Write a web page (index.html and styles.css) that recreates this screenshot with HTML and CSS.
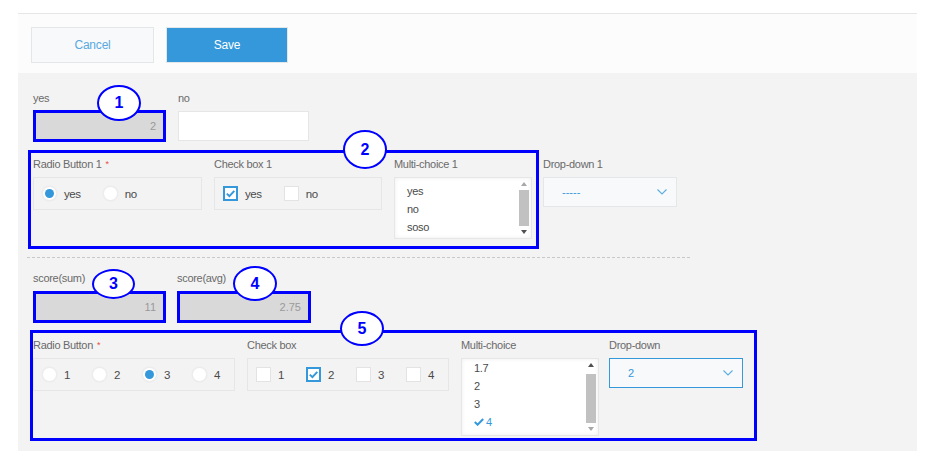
FILE: index.html
```html
<!DOCTYPE html>
<html>
<head>
<meta charset="utf-8">
<title>Form</title>
<link rel="stylesheet" href="styles.css">
</head>
<body>
<div class="panel">
  <div class="toolbar">
    <button class="btn btn-cancel">Cancel</button>
    <button class="btn btn-save">Save</button>
  </div>
  <div class="form">
    <div class="row row1">
      <div class="field w133">
        <div class="label">yes</div>
        <div class="calc up">2<span class="badge b1">1</span></div>
      </div>
      <div class="field w131">
        <div class="label">no</div>
        <div class="text-input"></div>
      </div>
    </div>

    <div class="row row2">
      <div class="group g2">
        <span class="badge b2">2</span>
        <div class="field w169">
          <div class="label">Radio Button 1<span class="req">*</span></div>
          <div class="choices">
            <span class="opt"><span class="radio on"></span>yes</span>
            <span class="opt"><span class="radio"></span>no</span>
          </div>
        </div>
        <div class="field w168">
          <div class="label">Check box 1</div>
          <div class="choices">
            <span class="opt"><span class="check on"><svg width="11" height="11" viewBox="0 0 11 11"><path d="M1.8 5.6 L4.4 8.1 L9.3 2.9" fill="none" stroke="#3498db" stroke-width="2"/></svg></span>yes</span>
            <span class="opt"><span class="check"></span>no</span>
          </div>
        </div>
        <div class="field w138">
          <div class="label">Multi-choice 1</div>
          <div class="list h62">
            <div class="list-items pad4">
              <div>yes</div>
              <div>no</div>
              <div>soso</div>
            </div>
            <div class="sb">
              <div class="sb-btn"><span class="tri-up light"></span></div>
              <div class="sb-thumb"></div>
              <div class="sb-btn"><span class="tri-down"></span></div>
            </div>
          </div>
        </div>
      </div>
      <div class="field w134 dd1">
        <div class="label">Drop-down 1</div>
        <div class="select"><span>-----</span><svg width="10" height="6" viewBox="0 0 10 6"><polyline points="0.5,0.5 5,5 9.5,0.5" fill="none" stroke="#5dade2" stroke-width="1.1"/></svg></div>
      </div>
    </div>

    <div class="divider"></div>

    <div class="row row3">
      <div class="field w133">
        <div class="label">score(sum)</div>
        <div class="calc">11<span class="badge b3">3</span></div>
      </div>
      <div class="field w134">
        <div class="label">score(avg)</div>
        <div class="calc">2.75<span class="badge b4">4</span></div>
      </div>
    </div>

    <div class="row row4">
      <div class="group g5">
        <span class="badge b5">5</span>
        <div class="field w202">
          <div class="label">Radio Button<span class="req">*</span></div>
          <div class="choices">
            <span class="opt"><span class="radio"></span>1</span>
            <span class="opt"><span class="radio"></span>2</span>
            <span class="opt"><span class="radio on"></span>3</span>
            <span class="opt"><span class="radio"></span>4</span>
          </div>
        </div>
        <div class="field w202">
          <div class="label">Check box</div>
          <div class="choices">
            <span class="opt"><span class="check"></span>1</span>
            <span class="opt"><span class="check on"><svg width="11" height="11" viewBox="0 0 11 11"><path d="M1.8 5.6 L4.4 8.1 L9.3 2.9" fill="none" stroke="#3498db" stroke-width="2"/></svg></span>2</span>
            <span class="opt"><span class="check"></span>3</span>
            <span class="opt"><span class="check"></span>4</span>
          </div>
        </div>
        <div class="field w138">
          <div class="label">Multi-choice</div>
          <div class="list h78">
            <div class="list-items">
              <div>1.7</div>
              <div>2</div>
              <div>3</div>
              <div class="sel"><svg width="10" height="8" viewBox="0 0 10 8"><path d="M0.8 4 L3.6 6.7 L9.2 1" fill="none" stroke="#3498db" stroke-width="2"/></svg>4</div>
            </div>
            <div class="sb">
              <div class="sb-btn"><span class="tri-up"></span></div>
              <div class="sb-thumb scrolled"></div>
              <div class="sb-btn"><span class="tri-down light"></span></div>
            </div>
          </div>
        </div>
        <div class="field w134 dd5">
          <div class="label">Drop-down</div>
          <div class="select active"><span>2</span><svg width="10" height="6" viewBox="0 0 10 6"><polyline points="0.5,0.5 5,5 9.5,0.5" fill="none" stroke="#5dade2" stroke-width="1.1"/></svg></div>
        </div>
      </div>
    </div>
  </div>
</div>
</body>
</html>
```
FILE: styles.css
```css
* { box-sizing: border-box; }
html, body { margin: 0; background: #fff; }
body { font-family: "Liberation Sans", Arial, sans-serif; color: #333; }

.panel { margin: 13px 0 0 18px; width: 899px; }

.toolbar {
  height: 60px;
  border-top: 1px solid #e6e6e6;
  background: #fcfcfc;
  padding: 13px 0 0 13px;
  display: flex;
  gap: 12px;
  align-items: flex-start;
}
.btn {
  height: 36px;
  margin: 0;
  padding: 0;
  border: 1px solid #e3e7e8;
  font: 12px "Liberation Sans", Arial, sans-serif;
  letter-spacing: -0.2px;
}
.btn-cancel { width: 123px; background: #f7f9fa; color: #5aa9e0; }
.btn-save { width: 122px; background: #3498db; color: #fff; }

.form {
  background: #f3f3f3;
  padding: 17px 0 10px 15px;
}

.row { display: flex; align-items: flex-start; }
.row1 { gap: 12px; }
.row2 { margin-top: 8px; }
.row3 { margin-top: 12px; gap: 11px; }
.row4 { margin-top: 7px; }

.field { flex: none; }
.w131 { width: 131px; }
.w133 { width: 133px; }
.w134 { width: 134px; }
.w138 { width: 138px; }
.w168 { width: 168px; }
.w169 { width: 169px; }
.w202 { width: 202px; }

.label {
  height: 16px;
  line-height: 16px;
  margin-bottom: 5px;
  font-size: 11px;
  letter-spacing: -0.3px;
  color: #6a6a6a;
  white-space: nowrap;
}
.req {
  color: #e74c3c;
  font-size: 9px;
  margin-left: 4px;
  vertical-align: 1px;
}

.calc {
  position: relative;
  height: 32px;
  background: #d9d9d9;
  border: 3px solid #0000ff;
  padding-right: 7px;
  text-align: right;
  line-height: 26px;
  font-size: 11px;
  color: #9a9a9a;
}
.calc.up { margin-top: -1px; }

.text-input {
  height: 30px;
  background: #fff;
  border: 1px solid #e6e6e6;
}

.group {
  position: relative;
  display: flex;
  align-items: flex-start;
  gap: 12px;
  border: 3px solid #0000ff;
}
.g2 { margin-left: -5px; padding: 3px 4px 7px 2px; }
.g5 { margin-left: -3px; padding: 4px 11px 2px 0; }
.dd1 { margin-left: 4px; padding-top: 6px; }
.dd5 { margin-left: -2px; }

.choices {
  height: 33px;
  border: 1px solid #e6e6e6;
  display: flex;
  align-items: center;
  padding-left: 8px;
}
.opt {
  display: flex;
  align-items: center;
  margin-right: 22px;
  font-size: 11.5px;
  letter-spacing: -0.4px;
  color: #4a4a4a;
}
.radio {
  position: relative;
  width: 15px;
  height: 15px;
  margin-right: 7px;
  border-radius: 50%;
  background: #fff;
  border: 1px solid #ececec;
  box-shadow: 0 0 2px rgba(0, 0, 0, 0.06);
}
.radio.on::after {
  content: "";
  position: absolute;
  left: 2px;
  top: 2px;
  width: 9px;
  height: 9px;
  border-radius: 50%;
  background: #3498db;
}
.check {
  width: 15px;
  height: 15px;
  margin-right: 7px;
  background: #fff;
  border: 1px solid #e3e3e3;
}
.check.on {
  border: 2px solid #3498db;
  display: flex;
  align-items: center;
  justify-content: center;
}
.check.on svg { display: block; }

.list {
  display: flex;
  background: #fff;
  border: 1px solid #e6e6e6;
  box-shadow: inset 0 0 4px rgba(0, 0, 0, 0.07);
}
.h62 { height: 62px; }
.h78 { height: 78px; }
.list-items {
  flex: 1;
  padding-left: 12px;
  font-size: 11px;
  line-height: 18px;
  letter-spacing: -0.3px;
  color: #4a4a4a;
}
.list-items.pad4 { padding-top: 4px; }
.list-items .sel { color: #3498db; display: flex; align-items: center; gap: 2px; }
.list-items .sel svg { display: block; }

.sb {
  width: 10px;
  margin-right: 2px;
  display: flex;
  flex-direction: column;
}
.sb-btn {
  height: 12px;
  display: flex;
  align-items: center;
  justify-content: center;
}
.sb-thumb { flex: 1; background: #c1c1c1; }
.sb-thumb.scrolled { margin-top: 3px; }
.tri-up, .tri-down {
  width: 0;
  height: 0;
  border-left: 3px solid transparent;
  border-right: 3px solid transparent;
}
.tri-up { border-bottom: 4px solid #505050; }
.tri-down { border-top: 4px solid #505050; }
.tri-up.light { border-bottom-color: #a8a8a8; }
.tri-down.light { border-top-color: #a8a8a8; }

.select {
  height: 30px;
  background: #f7f9fa;
  border: 1px solid #e3e7e8;
  display: flex;
  align-items: center;
  justify-content: space-between;
  padding: 0 9px 0 18px;
  font-size: 11px;
  color: #3498db;
}
.select.active { border-color: #3498db; }
.select svg { display: block; }

.divider {
  width: 664px;
  height: 1px;
  margin: 8px 0 0 -6px;
  background: repeating-linear-gradient(to right, #c8c8c8 0 3px, transparent 3px 5px);
}

.badge {
  position: absolute;
  z-index: 2;
  display: flex;
  align-items: center;
  justify-content: center;
  border: 2px solid #0000ff;
  border-radius: 50%;
  background: #fff;
  color: #0000ff;
  font: bold 16px "Liberation Sans", Arial, sans-serif;
  letter-spacing: 0;
}
.b1 { left: 61px; top: -28px; width: 44px; height: 36px; }
.b2 { left: 312px; top: -23px; width: 44px; height: 39px; }
.b3 { left: 56px; top: -25px; width: 43px; height: 30px; }
.b4 { left: 53px; top: -28px; width: 44px; height: 35px; }
.b5 { left: 307px; top: -22px; width: 44px; height: 35px; }
```
